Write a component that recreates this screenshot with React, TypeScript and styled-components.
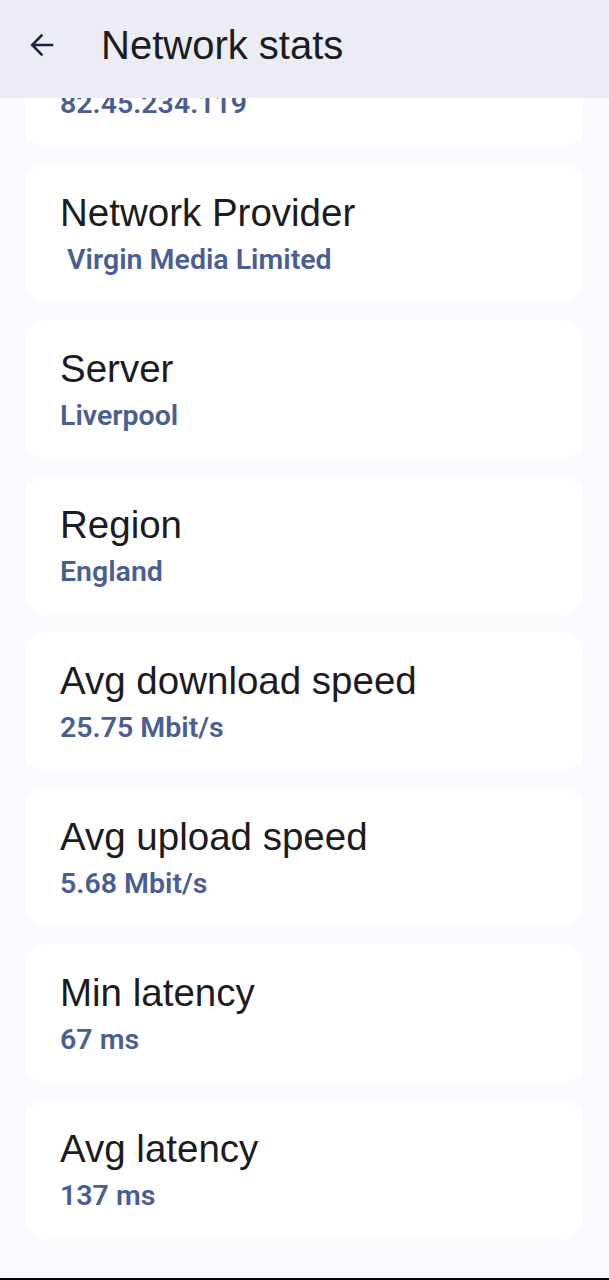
import React from "react";
import styled, { createGlobalStyle } from "styled-components";

const GlobalStyle = createGlobalStyle`
  html, body {
    margin: 0;
    padding: 0;
    background: #fbf9fe;
  }
  body {
    font-family: "Liberation Sans", Arial, sans-serif;
    -webkit-font-smoothing: antialiased;
  }
`;

const Screen = styled.div`
  min-height: 100vh;
  display: flex;
  flex-direction: column;
  background: #fbf9fe;
`;

const TopBar = styled.header`
  position: fixed;
  top: 0;
  left: 0;
  right: 0;
  height: 98px;
  box-sizing: border-box;
  background: #ececf4;
  display: flex;
  align-items: center;
  padding: 0 0 8px 28px;
  gap: 45px;
  z-index: 2;
`;

const BackButton = styled.button`
  width: 28px;
  height: 28px;
  padding: 0;
  border: none;
  background: transparent;
  display: flex;
  align-items: center;
  justify-content: center;
  color: #1b2140;
`;

const Title = styled.h1`
  margin: 0;
  font-size: 40px;
  font-weight: 400;
  line-height: 46px;
  color: #1c1b1f;
`;

const List = styled.main`
  flex: 1;
  display: flex;
  flex-direction: column;
  gap: 17px;
  padding: 8px 26px 30px 25px;
`;

const Card = styled.section`
  height: 139px;
  box-sizing: border-box;
  background: #ffffff;
  border-radius: 22px;
  padding: 26px 35px 0;
  display: flex;
  flex-direction: column;
  gap: 7px;
`;

const Label = styled.div`
  font-size: 38.5px;
  line-height: 46px;
  color: #1c1b1f;
  white-space: nowrap;
`;

const Value = styled.div`
  font-family: Roboto, "Liberation Sans", Arial, sans-serif;
  font-size: 28.5px;
  line-height: 34px;
  font-weight: 600;
  color: #4a5e93;
  white-space: pre;
`;

const BottomEdge = styled.div`
  height: 2px;
  background: #000;
`;

const stats: { label: string; value: string }[] = [
  { label: "IP address", value: "82.45.234.119" },
  { label: "Network Provider", value: " Virgin Media Limited" },
  { label: "Server", value: "Liverpool" },
  { label: "Region", value: "England" },
  { label: "Avg download speed", value: "25.75 Mbit/s" },
  { label: "Avg upload speed", value: "5.68 Mbit/s" },
  { label: "Min latency", value: "67 ms" },
  { label: "Avg latency", value: "137 ms" },
];

export default function App() {
  return (
    <Screen>
      <GlobalStyle />
      <TopBar>
        <BackButton aria-label="Back">
          <svg width="26" height="26" viewBox="0 0 26 26" fill="none">
            <path
              d="M23 13H3.5M12.5 3.6L3.2 13L12.5 22.4"
              stroke="currentColor"
              strokeWidth="2.5"
              strokeLinecap="square"
            />
          </svg>
        </BackButton>
        <Title>Network stats</Title>
      </TopBar>
      <List>
        {stats.map((s) => (
          <Card key={s.label}>
            <Label>{s.label}</Label>
            <Value>{s.value}</Value>
          </Card>
        ))}
      </List>
      <BottomEdge />
    </Screen>
  );
}
